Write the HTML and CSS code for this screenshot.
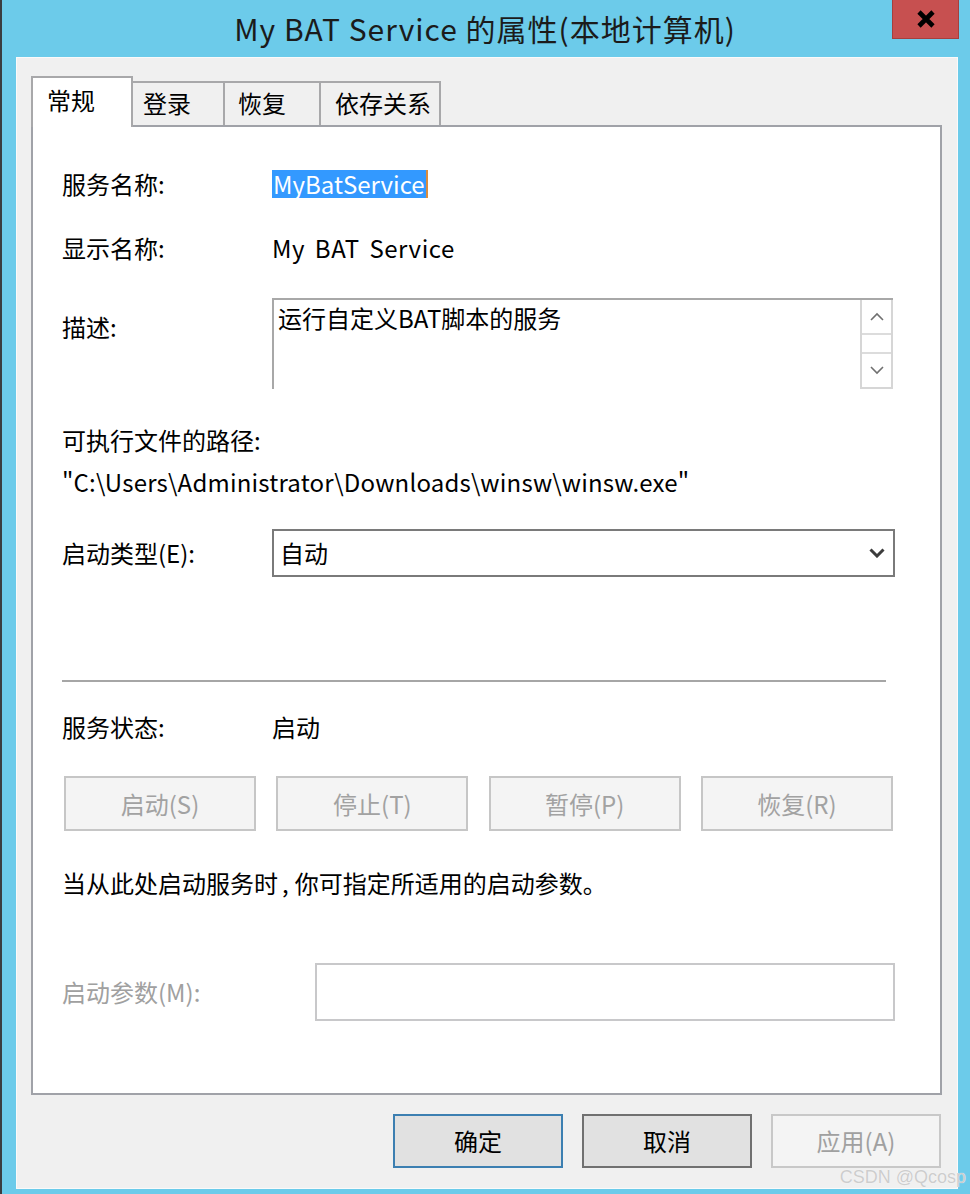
FILE: index.html
```html
<!DOCTYPE html>
<html lang="zh-CN">
<head>
    <meta charset="UTF-8">
    <title>My BAT Service 的属性(本地计算机)</title>
    <link rel="stylesheet" href="styles.css">
</head>
<body>
<div class="window">
    <div class="title-bar">
        <div class="title">My BAT Service 的属性(本地计算机)</div>
        <a href="javascript:" class="close">
            <svg width="20" height="18" viewBox="0 0 20 18"><path d="M3 2 L17 16 M17 2 L3 16" stroke="#000" stroke-width="4.6" fill="none"/></svg>
        </a>
    </div>

    <div class="client">
        <div class="tabs">
            <span class="tab tab-general on">常规</span>
            <span class="tab tab-logon">登录</span>
            <span class="tab tab-recovery">恢复</span>
            <span class="tab tab-deps">依存关系</span>
        </div>

        <div class="panel">
            <div class="field field-name">
                <span class="label">服务名称:</span>
                <span class="value"><span class="selected">MyBatService</span></span>
            </div>

            <div class="field field-display">
                <span class="label">显示名称:</span>
                <span class="value display-name">My BAT Service</span>
            </div>

            <div class="field field-desc">
                <span class="label">描述:</span>
                <div class="desc-box">
                    <div class="desc-text">运行自定义BAT脚本的服务</div>
                    <div class="scrollbar">
                        <span class="scroll-btn">
                            <svg width="14" height="9" viewBox="0 0 14 9"><path d="M1 8 L7 2 L13 8" stroke="#707070" stroke-width="1.6" fill="none"/></svg>
                        </span>
                        <span class="scroll-track"></span>
                        <span class="scroll-btn">
                            <svg width="14" height="9" viewBox="0 0 14 9"><path d="M1 1 L7 7 L13 1" stroke="#707070" stroke-width="1.6" fill="none"/></svg>
                        </span>
                    </div>
                </div>
            </div>

            <div class="text-line path-label">可执行文件的路径:</div>
            <div class="text-line path">"C:\Users\Administrator\Downloads\winsw\winsw.exe"</div>

            <div class="field field-type">
                <span class="label">启动类型(E):</span>
                <div class="select">
                    <span>自动</span>
                    <svg width="16" height="10" viewBox="0 0 16 10"><path d="M1.5 1.5 L8 8 L14.5 1.5" stroke="#3c3c3c" stroke-width="3" fill="none"/></svg>
                </div>
            </div>

            <div class="separator"></div>

            <div class="field field-status">
                <span class="label">服务状态:</span>
                <span class="value">启动</span>
            </div>

            <div class="service-btns">
                <button class="btn btn-off" disabled>启动(S)</button>
                <button class="btn btn-off" disabled>停止(T)</button>
                <button class="btn btn-off" disabled>暂停(P)</button>
                <button class="btn btn-off" disabled>恢复(R)</button>
            </div>

            <div class="text-line hint">当从此处启动服务时<span class="comma">,</span>你可指定所适用的启动参数。</div>

            <div class="field field-params">
                <span class="label label-off">启动参数(M):</span>
                <div class="param-input"></div>
            </div>
        </div>

        <div class="footer">
            <button class="btn btn-ok">确定</button>
            <button class="btn btn-cancel">取消</button>
            <button class="btn btn-apply" disabled>应用(A)</button>
        </div>
    </div>

    <div class="watermark">CSDN @Qcosp</div>
</div>
</body>
</html>
```

FILE: styles.css
```css
*{
    margin: 0;
    padding: 0;
    box-sizing: border-box;
}
body{
    width: 970px;
    height: 1194px;
    overflow: hidden;
    font-family: "Noto Sans CJK SC", "Noto Sans", sans-serif;
    font-size: 24px;
    color: #000;
}
.window{
    position: relative;
    height: 1194px;
    background-color: #6ccbea;
    border-left: 2px solid #3a3d40;
}

/* 标题栏 */
.title-bar{
    height: 57px;
    display: grid;
    grid-template-columns: 1fr auto 1fr;
    padding: 0 11px 0 9px;
}
.title{
    grid-column: 2;
    font-size: 30px;
    letter-spacing: 1px;
    line-height: 57px;
    color: #1b1b1b;
    white-space: nowrap;
}
.close{
    grid-column: 3;
    justify-self: end;
    width: 67px;
    height: 39px;
    background-color: #c75050;
    border: 1px solid #a6403e;
    border-top: none;
    display: flex;
    align-items: center;
    justify-content: center;
}

/* 窗口内容 */
.client{
    margin: 0 12px 0 14px;
    height: 1132px;
    background-color: #f0f0f0;
    border: 1px solid #fafafa;
    padding: 18px 15px 0 14px;
}
.tabs{
    display: flex;
    align-items: flex-end;
    height: 49px;
}
.tab{
    height: 44px;
    margin-left: -2px;
    border: 2px solid #a8a8aa;
    border-bottom: none;
    background-color: #f0f0f0;
    line-height: 40px;
}
.tab.on{
    position: relative;
    z-index: 1;
    height: 51px;
    margin-left: 0;
    margin-bottom: -2px;
    background-color: #fff;
    line-height: 44px;
}
.tab-general{
    width: 102px;
    padding-left: 14px;
}
.tab-logon{
    width: 94px;
    padding-left: 10px;
}
.tab-recovery{
    width: 98px;
    padding-left: 13px;
}
.tab-deps{
    width: 122px;
    padding-left: 14px;
}
.panel{
    height: 970px;
    border: 2px solid #a0a2a8;
    background-color: #fff;
    padding-left: 29px;
    padding-top: 1px;
}

.field{
    display: flex;
}
.label{
    width: 210px;
    flex-shrink: 0;
    line-height: 28px;
}
.value{
    line-height: 28px;
}
.display-name{
    letter-spacing: 0.5px;
    word-spacing: 4px;
}
.text-line{
    line-height: 28px;
    white-space: nowrap;
}
.field-name{
    margin-top: 42px;
}
.selected{
    display: inline-block;
    padding: 0 1px;
    background-color: #3399ff;
    color: #fff;
    border-right: 2px solid #d98c3f;
}
.field-display{
    margin-top: 36px;
}
.field-desc{
    margin-top: 36px;
}
.field-desc .label{
    padding-top: 15px;
}
.desc-box{
    display: flex;
    justify-content: space-between;
    width: 621px;
    height: 91px;
    border-top: 2px solid #a8a8a8;
    border-left: 2px solid #a8a8a8;
}
.desc-text{
    padding: 4px 0 0 4px;
    line-height: 28px;
}
.scrollbar{
    display: flex;
    flex-direction: column;
    width: 33px;
    border: 2px solid #d6d6d6;
    border-top: none;
}
.scroll-btn{
    height: 33px;
    display: flex;
    align-items: center;
    justify-content: center;
}
.scroll-track{
    flex: 1;
    border-top: 2px solid #dcdcdc;
    border-bottom: 2px solid #dcdcdc;
}
.path-label{
    margin-top: 37px;
}
.path{
    margin-top: 14px;
    letter-spacing: 0.2px;
}
.field-type{
    margin-top: 33px;
    align-items: center;
}
.select{
    width: 623px;
    height: 48px;
    border: 2px solid #7a7a7a;
    padding: 0 8px 0 6px;
    display: flex;
    align-items: center;
    justify-content: space-between;
    line-height: 28px;
}
.separator{
    margin-top: 103px;
    width: 824px;
    height: 2px;
    background-color: #a6a6a6;
}
.field-status{
    margin-top: 31px;
}
.service-btns{
    margin: 35px 0 0 2px;
    width: 829px;
    display: flex;
    justify-content: space-between;
}
.btn{
    font-family: "Noto Sans CJK SC", "Noto Sans", sans-serif;
    font-size: 24px;
    line-height: 28px;
    color: #000;
    background-color: #e1e1e1;
    border: 2px solid #adadad;
}
.btn-off{
    width: 192px;
    height: 55px;
    background-color: #f4f4f4;
    border-color: #c6c6c6;
    color: #a2a2a2;
}
.hint{
    margin-top: 38px;
}
.hint .comma{
    padding: 0 6px 0 4px;
}
.field-params{
    margin-top: 66px;
    align-items: center;
}
.field-params .label{
    width: 253px;
}
.label-off{
    color: #a0a0a0;
}
.param-input{
    width: 580px;
    height: 58px;
    border: 2px solid #c8c8ca;
}

/* 底部按钮 */
.footer{
    display: flex;
    justify-content: flex-end;
    gap: 19px;
    margin-top: 19px;
    padding-right: 1px;
}
.footer .btn{
    width: 170px;
    height: 54px;
}
.btn-ok{
    border-color: #3c7fb1;
}
.btn-cancel{
    border-color: #707070;
}
.btn-apply{
    background-color: #f4f4f4;
    border-color: #c8c8c8;
    color: #a0a0a0;
}

.watermark{
    position: absolute;
    right: 4px;
    bottom: 6px;
    font-family: "Liberation Sans", sans-serif;
    font-size: 18px;
    color: #cdcdcd;
    text-shadow: 0 0 1px #fff;
}
```
